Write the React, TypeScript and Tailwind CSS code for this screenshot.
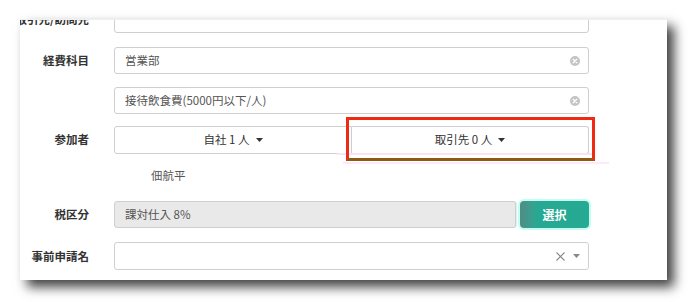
import React from 'react';

const font = { fontFamily: '"Noto Sans CJK JP", "Noto Sans", sans-serif' };

function ClearIcon() {
  return (
    <svg width="10" height="10" viewBox="0 0 10 10" className="shrink-0">
      <circle cx="5" cy="5" r="5" fill="#c4c4c4" />
      <path d="M3.2 3.2l3.6 3.6M6.8 3.2l-3.6 3.6" stroke="#fff" strokeWidth="1.3" strokeLinecap="round" />
    </svg>
  );
}

function Caret({ color = '#333' }: { color?: string }) {
  return (
    <svg width="7" height="4" viewBox="0 0 7 4" className="shrink-0">
      <path d="M0 0h7L3.5 4z" fill={color} />
    </svg>
  );
}

function Label({ children }: { children?: React.ReactNode }) {
  return (
    <div className="flex w-[94px] shrink-0 justify-end whitespace-nowrap pr-[25px] text-[11.5px] font-bold text-[#333]">
      {children}
    </div>
  );
}

function TextField({ value, clear }: { value?: string; clear?: boolean }) {
  return (
    <div className="flex h-[27px] w-[475px] items-center justify-between rounded-[3px] border border-[#cfcfcf] bg-white pl-[10px] pr-[8px] text-[11.5px] text-[#555]">
      <span>{value}</span>
      {clear && <ClearIcon />}
    </div>
  );
}

export default function App() {
  return (
    <div className="h-[302px] w-[688px] overflow-hidden bg-white pl-[20px] pt-[19px]" style={font}>
      <div className="relative h-[261px] w-[647px] overflow-hidden border-t border-[#f0f0f0] bg-white shadow-[7px_7px_11px_rgba(0,0,0,0.75)]">
        <div className="mt-[-14px] flex items-center">
          <Label>取引先/訪問先</Label>
          <TextField />
        </div>

        <div className="mt-[14px] flex items-center">
          <Label>経費科目</Label>
          <TextField value="営業部" clear />
        </div>

        <div className="mt-[13px] flex items-center">
          <Label />
          <TextField value="接待飲食費(5000円以下/人)" clear />
        </div>

        <div className="mt-[12px] flex items-center">
          <Label>参加者</Label>
          <div className="relative flex h-[28px] w-[475px] text-[11.5px] text-[#333]">
            <div className="flex flex-1 items-center justify-center gap-[6px] rounded-l-[3px] border border-[#cfcfcf] bg-white">
              <span>自社 1 人</span>
              <Caret />
            </div>
            <div className="flex flex-1 items-center justify-center gap-[6px] rounded-r-[3px] border border-l-0 border-[#cfcfcf] bg-white">
              <span>取引先 0 人</span>
              <Caret />
            </div>
            <div className="absolute left-[223px] top-[27px] h-[2px] w-[258px] bg-[#fbe3f7]" />
            <div className="absolute left-[232px] top-[-9px] h-[44px] w-[249px] border-[3px] border-[#f02a12] border-b-[#8a5c14]" />
            <div className="absolute left-[229px] top-[36px] h-[2px] w-[266px] bg-[#fde9fb]" />
          </div>
        </div>

        <div className="mt-[13px] pl-[131px] text-[11.5px] text-[#555]">佃航平</div>

        <div className="mt-[17px] flex items-center">
          <Label>税区分</Label>
          <div className="flex w-[475px] gap-[4px]">
            <div className="flex h-[27px] flex-1 items-center rounded-[3px] border border-[#cfcfcf] bg-[#e9e9e9] pl-[10px] text-[11.5px] text-[#555] shadow-[1px_0_0_#c9fbee]">
              課対仕入 8%
            </div>
            <div className="flex h-[27px] w-[69px] items-center justify-center rounded-[4px] bg-linear-to-r from-[#4f8c86] via-[#27a892] via-25% to-[#26aa93] text-[12px] font-bold text-white ring-2 ring-[#c6fdf1]">
              選択
            </div>
          </div>
        </div>

        <div className="mt-[14px] flex items-center">
          <Label>事前申請名</Label>
          <div className="flex h-[28px] w-[475px] items-center justify-end gap-[8px] rounded-[3px] border border-[#cfcfcf] bg-white pr-[8px]">
            <svg width="9" height="9" viewBox="0 0 9 9">
              <path d="M0.5 0.5l8 8M8.5 0.5l-8 8" stroke="#888" strokeWidth="1.1" />
            </svg>
            <Caret color="#888" />
          </div>
        </div>
      </div>
    </div>
  );
}
